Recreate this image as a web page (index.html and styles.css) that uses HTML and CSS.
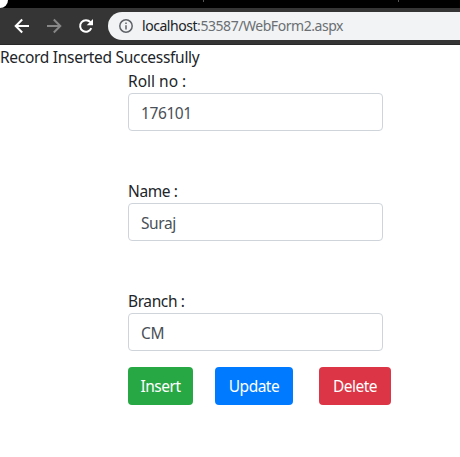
FILE: index.html
```html
<!DOCTYPE html>
<html lang="en">
<head>
<meta charset="utf-8">
<title>WebForm2</title>
<link rel="stylesheet" href="styles.css">
</head>
<body>
<header class="browser">
  <div class="tabs"><span class="tab"></span><span class="sep sep-a"></span><span class="sep sep-b"></span></div>
  <div class="toolbar">
    <svg class="nav" viewBox="0 0 16 16"><path d="M15 8H2M8.2 1.5L1.7 8l6.5 6.5"/></svg>
    <svg class="nav dim" viewBox="0 0 16 16"><path d="M1 8h13M7.8 1.5L14.3 8l-6.5 6.5"/></svg>
    <svg class="nav" viewBox="0 0 16 16"><path d="M13.3 10.2A5.8 5.8 0 1 1 12.4 4.2"/><path class="solid" d="M15 1v6.3H8.7z"/></svg>
    <div class="address">
      <svg class="info" viewBox="0 0 14 14"><circle cx="7" cy="7" r="6.2"/><path d="M7 6.2v4.2M7 3.5v1.6"/></svg>
      <span class="url"><span class="host">localhost</span>:53587/WebForm2.aspx</span>
    </div>
  </div>
</header>
<main>
  <div class="message">Record Inserted Successfully</div>
  <form class="form">
    <div class="field"><label class="roll" for="roll">Roll no :</label><input id="roll" type="text" value="176101"></div>
    <div class="field"><label for="name">Name :</label><input id="name" type="text" value="Suraj"></div>
    <div class="field last"><label for="branch">Branch :</label><input id="branch" type="text" value="CM"></div>
    <div class="buttons">
      <button type="button" class="btn insert">Insert</button>
      <button type="button" class="btn update">Update</button>
      <button type="button" class="btn delete">Delete</button>
    </div>
  </form>
</main>
</body>
</html>
```
FILE: styles.css
```css
* { box-sizing: border-box; }
body {
  margin: 0;
  background: #fff;
  color: #212529;
  font: 15.5px/24px "Noto Sans", sans-serif;
  letter-spacing: -0.5px;
  overflow: hidden;
}
.tabs { position: relative; height: 8px; background: #000; }
.tab { display: block; width: 8px; height: 8px; background: #fff; border-bottom-right-radius: 8px; }
.sep { position: absolute; top: 0; width: 1px; height: 2px; background: #555; }
.sep-a { left: 203px; }
.sep-b { left: 398px; }
.toolbar {
  display: flex;
  align-items: center;
  height: 37px;
  padding: 0 0 1px 14px;
  background: #353535;
  border-bottom: 1px solid #282828;
}
.nav { width: 16px; height: 16px; margin-right: 16px; fill: none; stroke: #fff; stroke-width: 2; }
.dim { stroke: #878787; }
.solid { fill: #fff; stroke: none; }
.address {
  display: flex;
  align-items: center;
  flex: 1;
  height: 28px;
  margin-left: -2px;
  padding-left: 11px;
  border-radius: 14px 0 0 14px;
  background: #f1f3f4;
}
.info { width: 14px; height: 14px; fill: none; stroke: #5f6368; stroke-width: 1.5; }
.url { margin-left: 9px; font-size: 14px; letter-spacing: -0.45px; color: #6b6f73; white-space: nowrap; }
.host { color: #202124; }
.message { height: 24px; letter-spacing: -0.29px; }
.form { width: 263px; margin-left: 128px; }
.field { height: 110px; }
.last { height: 78px; }
label { display: block; height: 24px; letter-spacing: -0.4px; }
.roll { letter-spacing: 0; }
input {
  display: block;
  width: 255px;
  height: 38px;
  padding: 7px 12px 5px;
  border: 1px solid #ced4da;
  border-radius: 4px;
  background: #fff;
  color: #495057;
  font: inherit;
  letter-spacing: -0.4px;
}
.buttons { display: flex; }
.btn {
  height: 38px;
  padding: 0;
  border: 0;
  border-radius: 4px;
  color: #fff;
  font: inherit;
  letter-spacing: inherit;
}
.insert { width: 65px; margin-right: 22px; background: #28a745; }
.update { width: 78px; margin-right: 26px; background: #007bff; }
.delete { width: 72px; background: #dc3545; }
```
